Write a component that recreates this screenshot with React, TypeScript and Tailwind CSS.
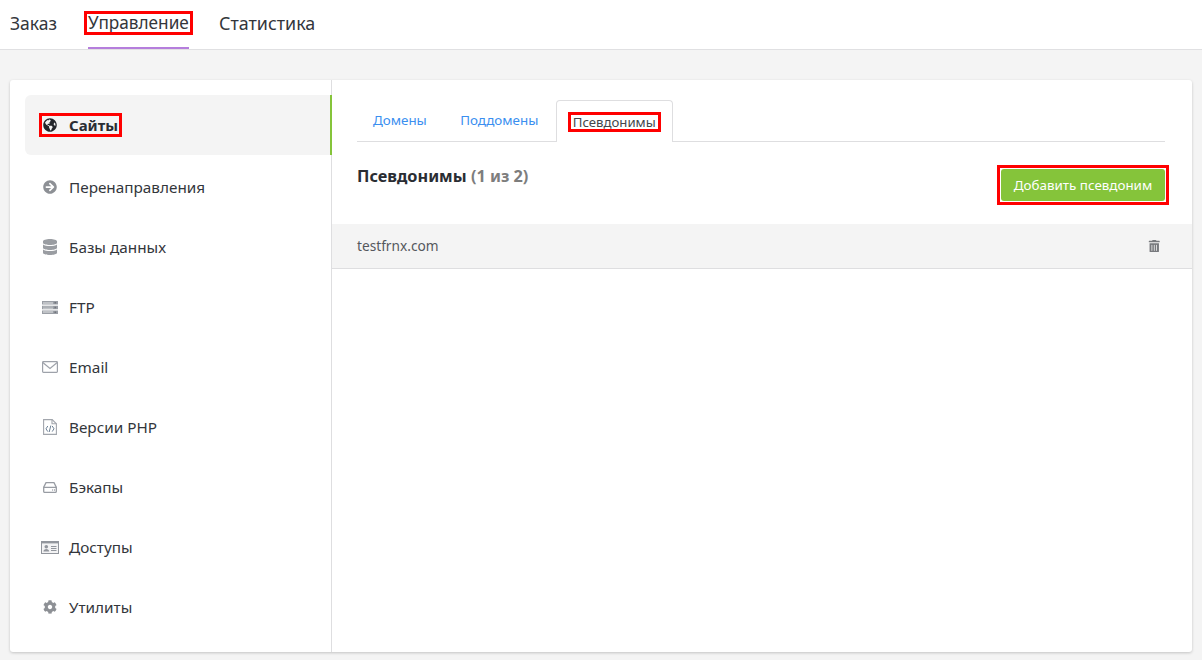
import { ReactNode } from 'react';
import { FaArrowCircleRight, FaCog, FaDatabase, FaGlobeAmericas, FaTrashAlt } from 'react-icons/fa';

function ServerIcon() {
  return (
    <svg viewBox="0 0 16 13" className="h-[13px] w-[16px]">
      <path fill="#9a9ea5" d="M0 0h16v3.6H0zM0 4.7h16v3.6H0zM0 9.4h16v3.6H0z" />
      <path fill="#e4e5e8" d="M1 1.1h10v.5H1zM1 2.2h10v.5H1zM1 5.8h10v.5H1zM1 6.9h10v.5H1zM1 10.5h10v.5H1zM1 11.6h10v.5H1z" />
      <path fill="#6f737a" d="M12.5 1.1h1.6v1.4h-1.6zM12.5 5.8h1.6v1.4h-1.6zM12.5 10.5h1.6v1.4h-1.6z" />
    </svg>
  );
}

function EnvelopeIcon() {
  return (
    <svg viewBox="0 0 16 12" className="h-[12px] w-[16px] text-[#9ea2aa]" fill="none" stroke="currentColor" strokeWidth="1.2">
      <rect x="0.6" y="0.6" width="14.8" height="10.8" rx="0.8" />
      <path d="M0.8 1.5 8 7.4l7.2-5.9" />
    </svg>
  );
}

function FileCodeIcon() {
  return (
    <svg viewBox="0 0 14 16" className="h-[16px] w-[14px] text-[#a2a6ad]" fill="none" stroke="currentColor" strokeWidth="1.1">
      <path d="M.6.6h8.6l4.2 4.2v10.6H.6z" />
      <path d="M9 .6v4.2h4.4" />
      <path d="M4.8 7 3 9.8l1.8 2.8M9.2 7 11 9.8l-1.8 2.8M7.8 6.6l-1.6 6.4" stroke="#6c7f94" strokeWidth="1" />
    </svg>
  );
}

function HddIcon() {
  return (
    <svg viewBox="0 0 14 11" className="h-[11px] w-[14px] text-[#989ca3]" fill="none" stroke="currentColor" strokeWidth="1.3">
      <path d="M3 .7h8l2.3 4.5v4.2a1 1 0 0 1-1 1H1.7a1 1 0 0 1-1-1V5.2z" />
      <path d="M.8 5.4h12.4M9.2 8h.9M11 8h.9" />
    </svg>
  );
}

function IdCardIcon() {
  return (
    <svg viewBox="0 0 18 13" className="h-[13px] w-[18px] text-[#92969d]">
      <rect x="0.5" y="0.5" width="17" height="12" fill="#f3f3f4" stroke="currentColor" />
      <rect x="1" y="1" width="16" height="1.4" fill="currentColor" />
      <circle cx="5.3" cy="5.8" r="1.8" fill="currentColor" />
      <path d="M2.4 10.6c0-3.4 5.8-3.4 5.8 0z" fill="currentColor" />
      <path d="M10 5.5h5.5M10 7.5h5.5M10 9.5h5.5" stroke="currentColor" />
    </svg>
  );
}

type Item = { label: string; icon: ReactNode };

const items: Item[] = [
  { label: 'Перенаправления', icon: <FaArrowCircleRight className="text-[14px] text-[#8d9095]" /> },
  { label: 'Базы данных', icon: <FaDatabase className="text-[16px] text-[#9a9da2]" /> },
  { label: 'FTP', icon: <ServerIcon /> },
  { label: 'Email', icon: <EnvelopeIcon /> },
  { label: 'Версии PHP', icon: <FileCodeIcon /> },
  { label: 'Бэкапы', icon: <HddIcon /> },
  { label: 'Доступы', icon: <IdCardIcon /> },
  { label: 'Утилиты', icon: <FaCog className="text-[14px] text-[#8d9095]" /> },
];

const marked = 'outline-[3px] outline-offset-1 outline-[#ff0000]';

export default function App() {
  return (
    <div className="h-[660px] overflow-hidden bg-[#f4f4f4] font-['Noto_Sans',sans-serif] text-[#33363b]">
      <header className="flex h-[50px] items-stretch gap-[30px] border-b border-[#e0e0e2] bg-white pl-[10px] text-[17.5px]">
        <div className="flex w-[48px] items-center pb-[3px]">Заказ</div>
        <div className="flex w-[101px] items-center border-b-2 border-[#b57edc] pb-[1px] text-[17.2px]">
          <span className={`${marked} leading-[16px]`}>Управление</span>
        </div>
        <div className="flex items-center pb-[3px] text-[17.9px]">Статистика</div>
      </header>

      <main className="mx-[10px] mt-[30px] flex h-[572px] rounded-[3px] bg-white shadow-[0_1px_3px_rgba(0,0,0,0.2)]">
        <aside className="w-[322px] shrink-0 border-r border-[#dedee0] pl-[15px] pt-[15px]">
          <div className="mr-[-1px] flex h-[60px] items-center rounded-l-[6px] border-r-2 border-[#85c43a] bg-[#f4f4f4] pl-[18px] font-bold">
            <span className={`${marked} flex items-center gap-[12px] text-[15px] leading-[16px] text-[#2a2d33]`}>
              <FaGlobeAmericas className="text-[14px] text-[#23262b]" />
              Сайты
            </span>
          </div>
          <nav className="flex flex-col">
            {items.map((item) => (
              <div key={item.label} className="flex h-[60px] items-center text-[15.3px] first:mt-[2px]">
                <span className="flex w-[44px] justify-center pl-[6px]">{item.icon}</span>
                <span>{item.label}</span>
              </div>
            ))}
          </nav>
        </aside>

        <section className="min-w-0 flex-1">
          <div className="pl-[25px] pr-[27px] pt-[20px]">
            <div className="flex h-[42px] items-stretch border-b border-[#dedee0] text-[13.4px] text-[#3b8ff0]">
              <div className="flex items-center px-[16px]">Домены</div>
              <div className="flex w-[113px] items-center justify-center">Поддомены</div>
              <div className="mb-[-1px] flex w-[117px] items-center justify-center rounded-t-[4px] border border-b-0 border-[#dedee0] bg-white text-[13.2px] text-[#44474c]">
                <span className={`${marked} px-[1px] leading-[12px]`}>Псевдонимы</span>
              </div>
            </div>
            <div className="flex h-[82px] items-start justify-between">
              <h2 className="pt-[22px] text-[16.3px] font-bold leading-[24px] text-[#2a2d33]">
                Псевдонимы <span className="text-[#7d7d7d]">(1 из 2)</span>
              </h2>
              <div className={`mt-[27px] ${marked}`}>
                <button className="block h-[32px] w-[164px] rounded-[3px] bg-[#85c43a] text-[13.4px] text-white">
                  Добавить псевдоним
                </button>
              </div>
            </div>
          </div>
          <div className="flex h-[45px] items-center justify-between border-b border-[#dedee0] bg-[#f4f4f4] pl-[25px] pr-[32px] text-[13.7px] text-[#55585d]">
            <span>testfrnx.com</span>
            <FaTrashAlt className="text-[12.5px] text-[#77797d]" />
          </div>
        </section>
      </main>
    </div>
  );
}
